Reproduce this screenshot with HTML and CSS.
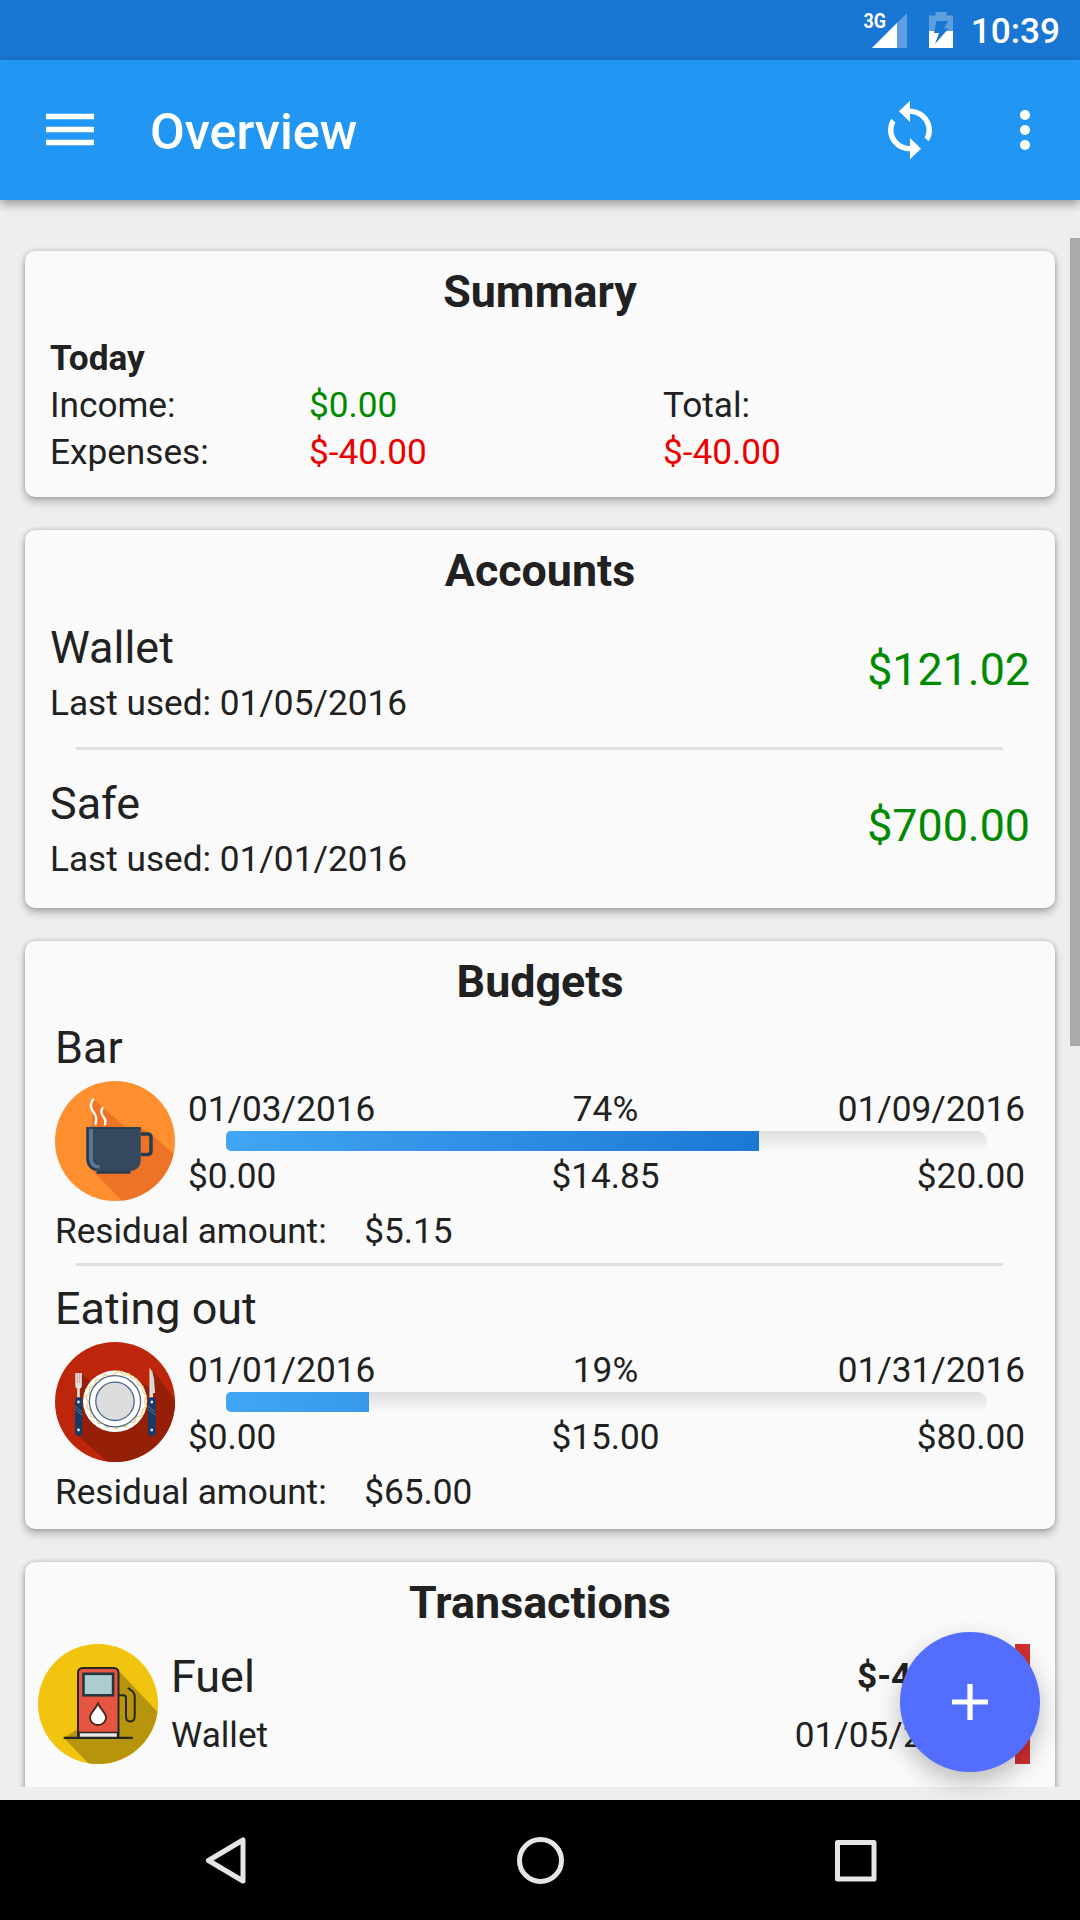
FILE: index.html
```html
<!DOCTYPE html>
<html lang="en">
<head>
<meta charset="utf-8">
<title>Overview</title>
<link rel="stylesheet" href="styles.css">
</head>
<body>
<div class="screen">
  <div class="status-bar">
    <svg class="signal" width="46" height="40" viewBox="0 0 46 40">
      <path d="M10 38 45 3v35z" fill="#fff" fill-opacity=".3"/>
      <path d="M10 38 35 13v25z" fill="#fff"/>
      <text class="network" x="1.5" y="17.5" textLength="22.5" lengthAdjust="spacingAndGlyphs">3G</text>
    </svg>
    <svg class="battery" width="24" height="36" viewBox="0 0 24 36">
      <path d="M0 3.500h6.500V0h11v3.500H24V19H0z" fill="#fff" fill-opacity=".3"/>
      <path d="M0 19h24v17H0z" fill="#fff"/>
      <path d="M7.500 9h11.500l-4 7.500h4.500L6 32l4-11H5z" fill="#1976d2"/>
    </svg>
    <span class="clock">10:39</span>
  </div>

  <header class="app-bar">
    <svg class="menu" width="48" height="34" viewBox="0 0 48 34"><path d="M0 3.500h48M0 16.500h48M0 29.500h48" stroke="#fff" stroke-width="5.500"/></svg>
    <h1 class="app-title">Overview</h1>
    <svg class="sync" width="66" height="64" viewBox="0 0 24 24" preserveAspectRatio="none"><path fill="#fff" d="M12 4V1L8 5l4 4V6c3.310 0 6 2.690 6 6 0 1.010-.25 1.970-.7 2.800l1.460 1.460C19.540 15.030 20 13.570 20 12c0-4.420-3.580-8-8-8zm0 14c-3.310 0-6-2.690-6-6 0-1.010.25-1.970.7-2.800L5.240 7.740C4.460 8.970 4 10.430 4 12c0 4.420 3.580 8 8 8v3l4-4-4-4v3z"/></svg>
    <svg class="more" width="10" height="40" viewBox="0 0 10 40" fill="#fff"><circle cx="5" cy="5" r="5"/><circle cx="5" cy="20" r="5"/><circle cx="5" cy="35" r="5"/></svg>
  </header>

  <main class="content">
    <section class="card summary">
      <h2 class="card-title">Summary</h2>
      <div class="summary-grid">
        <b class="today">Today</b>
        <span>Income:</span><span class="positive">$0.00</span><span>Total:</span>
        <span>Expenses:</span><span class="negative">$-40.00</span><span class="negative">$-40.00</span>
      </div>
    </section>

    <section class="card accounts">
      <h2 class="card-title">Accounts</h2>
      <div class="account">
        <div>
          <div class="name">Wallet</div>
          <div class="last-used">Last used: 01/05/2016</div>
        </div>
        <div class="balance">$121.02</div>
      </div>
      <hr class="divider">
      <div class="account">
        <div>
          <div class="name">Safe</div>
          <div class="last-used">Last used: 01/01/2016</div>
        </div>
        <div class="balance">$700.00</div>
      </div>
    </section>

    <section class="card budgets">
      <h2 class="card-title">Budgets</h2>
      <div class="budget">
        <div class="name">Bar</div>
        <div class="budget-body">
          <svg class="category" width="120" height="120" viewBox="0 0 120 120">
            <defs><clipPath id="disc"><circle cx="60" cy="60" r="60"/></clipPath></defs>
            <g clip-path="url(#disc)">
              <path d="M0 0h120v120H0z" fill="#ff8f2f"/>
              <path d="M38.500 18.500 71 46.500h15L97 54l33 29v50H80L34 86z" fill="#ed7426"/>
            </g>
            <path d="M38 18.500c-5 8 0 11 2 15 2 3.500 1 7 .5 9.500M47.500 27c-3 4.500 0 8 2 10.500 1.500 2 1 4 .5 6" fill="none" stroke="#fff" stroke-width="2.300" stroke-linecap="round"/>
            <path d="M86 53h6.500q3.500 0 3.500 3.500v13.500q0 3.500-3.500 3.500H86" fill="none" stroke="#293b4c" stroke-width="3.500"/>
            <path d="M41.500 88h34v4.700h-34z" fill="#293b4c"/>
            <path d="M31.300 46.300h54.500V80q-1 9-10 10h-34q-9-1-10.500-10z" fill="#34495e"/>
            <path d="M32.500 47v32q1 7 8 10" fill="none" stroke="#263747" stroke-width="1.500"/>
            <path d="M36 47v32q1 6.500 7 6.700" fill="none" stroke="#58799a" stroke-width="3.600" stroke-linecap="round"/>
            <path d="M31.300 46.300h54.500v1.500H31.300z" fill="#263747"/>
          </svg>
          <div class="figures">
            <div class="triple"><span>01/03/2016</span><span>74%</span><span>01/09/2016</span></div>
            <div class="track"><div class="fill" style="width:533px"></div></div>
            <div class="triple"><span>$0.00</span><span>$14.85</span><span>$20.00</span></div>
          </div>
        </div>
        <div class="residual"><span>Residual amount:</span><span>$5.15</span></div>
      </div>
      <hr class="divider">
      <div class="budget">
        <div class="name">Eating out</div>
        <div class="budget-body">
          <svg class="category" width="120" height="120" viewBox="0 0 120 120">
            <g clip-path="url(#disc)">
              <path d="M0 0h120v120H0z" fill="#bd260b"/>
              <path d="M26.500 31.500 60 63 98 28l32 44v58H64L22 93z" fill="#961f07"/>
              <path d="M27 33 62 29 95 45 98 28 80 20H30z" fill="#bd260b"/>
              <path d="M27 33v15l12-3z" fill="#961f07"/>
            </g>
            <ellipse cx="60" cy="59.300" rx="32" ry="30.700" fill="#fff"/>
            <path d="M60 31.500l4.500-2.500 4 4 5.500-1.500 2.500 5 5.500.5 1 5.500 5 2-.5 5.500 4 3.800-2.500 5.200 2.500 5.500-4.500 3.500v5.500l-5.500 1.500-2 5.500-5.500-.5-3 5-5.500-2-4 4-4.500-3.500-5 2.500-3.500-5-5.500.5-2-5.500-5.500-1.500.5-5.500-4.500-3.500 2-5.500-3-5 4-4 0-5.500 5-2 1.500-5.500 5.500-.5 3-5 5.500 1.500z" fill="none" stroke="#f2cf78" stroke-width="1.200"/>
            <circle cx="60" cy="59.300" r="25.600" fill="#fff" stroke="#4a668d" stroke-width="1.300"/>
            <circle cx="60" cy="59.300" r="19.200" fill="#ddd" stroke="#4a668d" stroke-width="1.300"/>
            <path d="M20.300 31h6.500v13q0 2-2 2.500V56h-2.600v-9.500q-1.900-.5-1.900-2.500z" fill="#e2e2e2"/>
            <path d="M22.400 31v10M24.700 31v10" stroke="#b77" stroke-width=".7"/>
            <path d="M94.500 56V26q3 2 4.500 11l1 14h-2v5z" fill="#e2e2e2"/>
            <path d="M97 29v22" stroke="#bcbcbc" stroke-width=".8"/>
            <g fill="#173a68"><rect x="20" y="55.300" width="7.200" height="38.400" rx="3"/><rect x="93" y="55.300" width="7.600" height="38.400" rx="3"/></g>
            <path d="M20 64l7 6M20 67l7 6M93 64l7 6M93 67l7 6" stroke="#7188a6" stroke-width=".8"/>
            <g fill="#dce6ef"><circle cx="23.500" cy="60" r="1.400"/><circle cx="23.500" cy="88" r="1.400"/><circle cx="96.800" cy="60" r="1.400"/><circle cx="96.800" cy="88" r="1.400"/></g>
          </svg>
          <div class="figures">
            <div class="triple"><span>01/01/2016</span><span>19%</span><span>01/31/2016</span></div>
            <div class="track"><div class="fill" style="width:143px"></div></div>
            <div class="triple"><span>$0.00</span><span>$15.00</span><span>$80.00</span></div>
          </div>
        </div>
        <div class="residual"><span>Residual amount:</span><span>$65.00</span></div>
      </div>
    </section>

    <section class="card transactions">
      <h2 class="card-title">Transactions</h2>
      <div class="transaction">
        <svg class="category" width="120" height="120" viewBox="0 0 120 120">
          <g clip-path="url(#disc)">
            <path d="M0 0h120v120H0z" fill="#f1c40f"/>
            <path d="M80 26l50 53v51H61L26 94l15-10z" fill="#b6940b"/>
          </g>
          <path d="M40 94V29q0-5 5-5h30.500q5 0 5 5v65z" fill="#e65541" stroke="#262626" stroke-width="2"/>
          <path d="M41 88.500h38.700V94H41z" fill="#e8e6e6" stroke="#262626" stroke-width="1.700"/>
          <rect x="45.500" y="29.800" width="29.600" height="21.500" fill="#abcdd1" stroke="#253640" stroke-width="2.600"/>
          <path d="M60 59.500C57 66 52 69 52 73.500a8 7.500 0 0 0 16 0C68 69 63 66 60 59.500z" fill="#fff" stroke="#46261c" stroke-width="1.800"/>
          <path d="M25.700 93.800h69" stroke="#262626" stroke-width="2.200"/>
          <path d="M81 51.300h4.500q2.500 0 2.500 2.500V72q0 5.500 4.300 5.500T96.700 72V51l-2-3.500-5-3.700" fill="none" stroke="#262626" stroke-width="2"/>
        </svg>
        <div class="transaction-text">
          <div class="name">Fuel</div>
          <div class="wallet">Wallet</div>
        </div>
        <div class="transaction-figures">
          <b class="amount">$-40.00</b>
          <div>01/05/2016</div>
        </div>
        <div class="kind"></div>
      </div>
    </section>
  </main>

  <footer class="nav-bar">
    <svg class="nav-icons" width="1080" height="120" viewBox="0 0 1080 120" fill="none" stroke="#e6e6e6" stroke-width="5" stroke-linejoin="round">
      <path d="M243 40v41L208.500 60.500z"/>
      <circle cx="540.500" cy="60.500" r="21"/>
      <rect x="837.500" y="42.500" width="36.500" height="36.500"/>
    </svg>
  </footer>
  <div class="scrollbar"></div>
  <button class="fab" aria-label="Add"><svg width="36" height="36" viewBox="0 0 36 36"><path d="M18 0v36M0 18h36" stroke="#fff" stroke-width="5.200"/></svg></button>
</div>
</body>
</html>
```
FILE: styles.css
```css
* { box-sizing: border-box; }
body { margin: 0; }
h1, h2 { margin: 0; }

.screen {
  position: relative;
  display: flex;
  flex-direction: column;
  width: 1080px;
  height: 1920px;
  overflow: hidden;
  background: #eee;
  color: #212121;
  font: 35.2px/47px Roboto, sans-serif;
}

.status-bar {
  display: flex;
  align-items: center;
  justify-content: flex-end;
  height: 60px;
  padding-right: 20px;
  background: #1976d2;
  color: #fff;
}
.signal { margin-right: 21px; }
.network { font: 700 20.5px Roboto, sans-serif; fill: #fff; }
.battery { margin-right: 18px; }
.clock { padding-top: 2px; font-size: 35.2px; font-weight: 500; line-height: 60px; }

.app-bar {
  z-index: 1;
  display: flex;
  align-items: center;
  height: 140px;
  padding: 0 50px 0 46px;
  background: #2196f3;
  color: #fff;
  box-shadow: 0 4px 10px rgba(0, 0, 0, .38);
}
.app-title {
  flex: 1;
  margin-left: 56px;
  padding-top: 3px;
  font-size: 50.5px;
  font-weight: 500;
  line-height: 60px;
}
.sync { margin-right: 77px; }

.content {
  display: flex;
  flex-direction: column;
  gap: 33px;
  height: 1587px;
  padding: 51px 25px 0;
  overflow: hidden;
}
.card {
  flex: none;
  padding-top: 14px;
  border-radius: 10px;
  background: #fafafa;
  box-shadow: 0 0 5px rgba(0, 0, 0, .22), 0 5px 9px rgba(0, 0, 0, .24);
}
.card-title {
  font-size: 44.8px;
  font-weight: 700;
  line-height: 53px;
  text-align: center;
}
.name { font-size: 44.9px; line-height: 53px; }
.divider {
  height: 3px;
  margin: 0 52px 0 51px;
  border: 0;
  background: #e0e0e0;
}
.positive { color: #008a00; }
.negative { color: #eb0000; }

.summary { height: 246px; }
.summary-grid {
  display: grid;
  grid-template-columns: 259px 354px 1fr;
  padding: 17px 25px 0;
}
.today { grid-column: 1 / -1; }

.accounts { height: 378px; }
.account {
  display: flex;
  justify-content: space-between;
  height: 150px;
  padding: 24px 25px 0;
}
.accounts .divider { margin-bottom: 3px; }
.last-used { margin-top: 6px; }
.balance {
  padding-top: 22px;
  color: #008a00;
  font-size: 44.8px;
  line-height: 53px;
}

.budgets { height: 588px; }
.budget { height: 255px; padding: 13px 30px 0 30px; }
.budget + .divider { margin-bottom: 3px; }
.budget-body { display: flex; gap: 13px; margin-top: 7px; }
.category { display: block; flex: none; }
.figures { flex: 1; }
.triple { display: grid; grid-template-columns: 1fr 1fr 1fr; padding-top: 2px; }
.triple > :nth-child(2) { padding-right: 2px; text-align: center; }
.triple > :nth-child(3) { text-align: right; }
.triple:first-child { padding-top: 5px; height: 50px; }
.track {
  height: 20px;
  margin: 0 38px;
  border-radius: 5px 10px 10px 5px;
  background: linear-gradient(#dedede, #fafafa);
  overflow: hidden;
}
.fill {
  height: 100%;
  background: linear-gradient(100deg, #42a5f5, #1976d2) 0 0 / 560px 100% no-repeat;
}
.residual { display: flex; gap: 37.500px; margin-top: 7px; }

.transactions { height: 300px; }
.transaction {
  display: flex;
  padding: 15px 25px 0 13px;
}
.transaction-text { flex: 1; padding: 6px 0 0 13px; }
.wallet { margin-top: 9px; }
.transaction-figures { margin-right: 33px; padding-top: 9px; text-align: right; }
.amount { display: block; margin-bottom: 12px; }
.kind { width: 15px; height: 120px; background: #d32f2f; }

.nav-bar { height: 120px; margin-top: 13px; background: #000; }
.nav-icons { display: block; }

.scrollbar {
  position: absolute;
  top: 238px;
  right: 0;
  width: 10px;
  height: 808px;
  background: #aaa;
}
.fab {
  position: absolute;
  top: 1632px;
  right: 40px;
  display: grid;
  place-items: center;
  width: 140px;
  height: 140px;
  padding: 0;
  border: 0;
  border-radius: 50%;
  background: #536dfe;
  box-shadow: 0 10px 24px rgba(0, 0, 0, .25);
}
```
